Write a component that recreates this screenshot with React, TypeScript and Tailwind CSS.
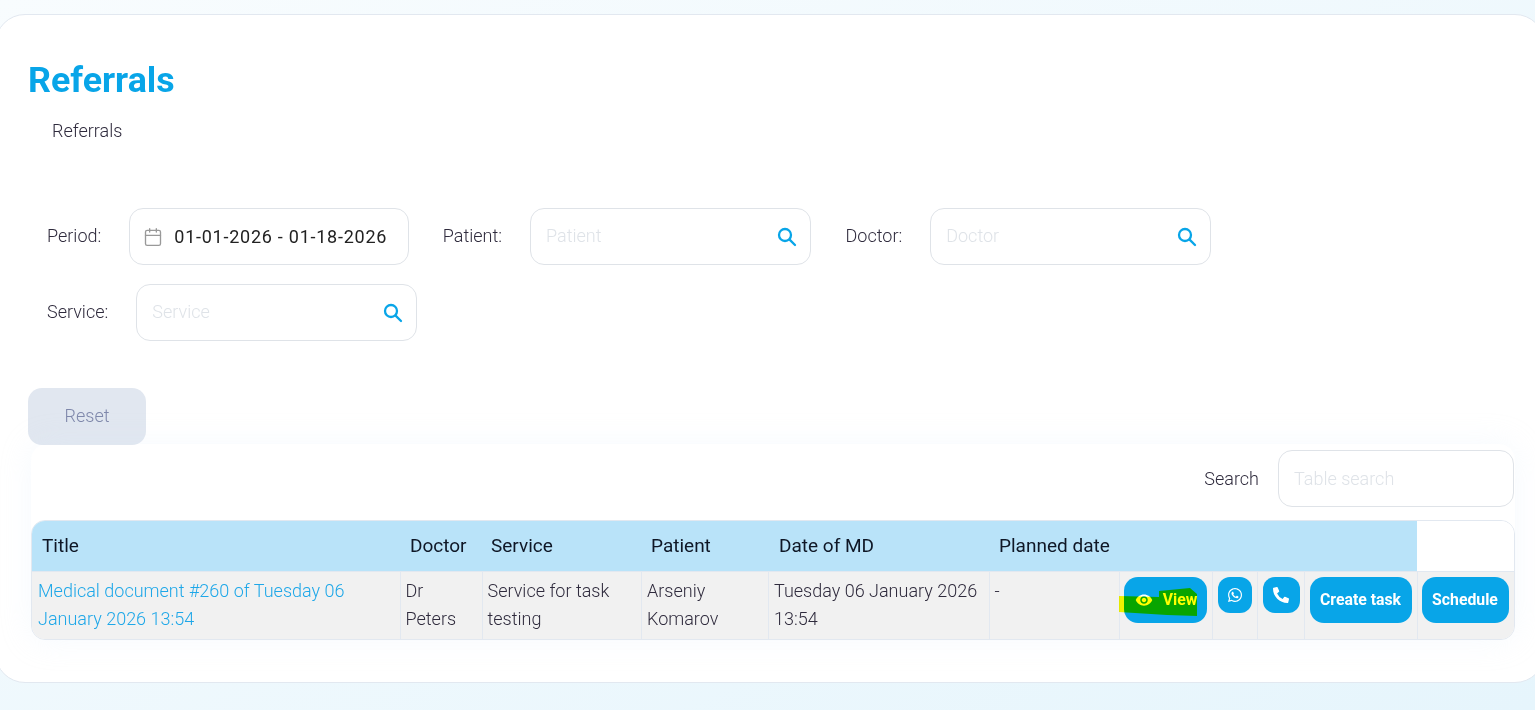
import { Calendar } from "lucide-react";
import { FaWhatsapp, FaPhoneAlt } from "react-icons/fa";
import { MdRemoveRedEye } from "react-icons/md";

const inputBox = "flex h-[57px] items-center rounded-[14px] border border-[#dfe3e8] bg-white";

function SearchIcon() {
  return (
    <svg width="20" height="20" viewBox="0 0 20 20" fill="none" stroke="#08a5e8" strokeWidth="2.3" strokeLinecap="round">
      <circle cx="8" cy="8" r="6" />
      <line x1="12.6" y1="12.6" x2="18" y2="18" />
    </svg>
  );
}

function SearchField({ placeholder, width }: { placeholder: string; width: string }) {
  return (
    <div className={`${inputBox} ${width} pl-[15px] pr-[13px]`}>
      <span className="flex-1 pb-[2px] text-[18px] font-light text-[#dfe3e8]">{placeholder}</span>
      <SearchIcon />
    </div>
  );
}

function Label({ children }: { children: string }) {
  return <span className="mr-[28px] pb-[2px] text-[18px] font-light text-[#2f2b3d]">{children}</span>;
}

const cell = "border-l border-[#e2e8f0] align-top";
const head = "bg-[#b9e3f9] text-[19px] font-normal";
const btn = "flex h-[46px] items-center justify-center rounded-[14px] bg-[#08a5e8] text-[15.8px] font-bold text-white";

export default function App() {
  return (
    <div
      className="h-[710px] overflow-hidden bg-gradient-to-br from-[#f8fcfe] to-[#e6f5fc] pt-[14px] text-[#2f2b3d]"
      style={{ fontFamily: "Roboto, sans-serif" }}
    >
      <div className="-ml-[5px] h-[669px] w-[1550px] rounded-[30px] border border-[#e2e8f0] bg-white pl-[32px] pt-[40px]">
        <h1 className="text-[35.8px] font-bold leading-[50px] text-[#08a5e8]">Referrals</h1>
        <p className="ml-[24px] mt-[12px] text-[18px] font-light leading-[28px]">Referrals</p>

        <div className="ml-[19px] mt-[63px] flex flex-col gap-[19px]">
          <div className="flex items-center">
            <Label>Period:</Label>
            <div className={`${inputBox} w-[280px] pl-[13px]`}>
              <Calendar size={20} strokeWidth={1.6} className="text-[#999]" />
              <span className="ml-[11px] text-[18px] tracking-[0.75px] text-[#222]">01-01-2026 - 01-18-2026</span>
            </div>
            <span className="ml-[33.5px] flex"><Label>Patient:</Label></span>
            <SearchField placeholder="Patient" width="w-[281px]" />
            <span className="ml-[34.5px] flex"><Label>Doctor:</Label></span>
            <SearchField placeholder="Doctor" width="w-[281px]" />
          </div>
          <div className="flex items-center">
            <Label>Service:</Label>
            <SearchField placeholder="Service" width="w-[281px]" />
          </div>
        </div>

        <button className="mt-[47px] block h-[57px] w-[118px] rounded-[14px] bg-[#e1e7f0] pb-[2px] text-[18px] font-light text-[#7f88ab]">
          Reset
        </button>

        <div className="ml-[3px] w-[1484px] rounded-[16px] shadow-[0_0_30px_rgba(220,235,250,0.25)]">
          <div className="-mt-px flex items-center justify-end pt-[6px]">
            <span className="mr-[19px] text-[18px] font-light">Search</span>
            <div className={`${inputBox} mr-[1px] w-[236px] pl-[15px] text-[18px] font-light text-[#dfe3e8]`}>Table search</div>
          </div>
          <div className="mt-[13px] overflow-hidden rounded-[14px] border border-[#e2e8f0]">
            <table className="w-full table-fixed border-collapse text-[18px] font-light">
              <colgroup>
                <col className="w-[368px]" />
                <col className="w-[82px]" />
                <col className="w-[159px]" />
                <col className="w-[127px]" />
                <col className="w-[221px]" />
                <col className="w-[130px]" />
                <col className="w-[93px]" />
                <col className="w-[45px]" />
                <col className="w-[47px]" />
                <col className="w-[113px]" />
                <col />
              </colgroup>
              <thead>
                <tr className="h-[50px] text-left text-[#0f1726]">
                  <th className={`${head} pl-[10px]`}>Title</th>
                  <th className={`${head} pl-[10px]`}>Doctor</th>
                  <th className={`${head} pl-[9px]`}>Service</th>
                  <th className={`${head} pl-[10px]`}>Patient</th>
                  <th className={`${head} pl-[11px]`}>Date of MD</th>
                  <th colSpan={5} className={`${head} pl-[10px]`}>Planned date</th>
                  <th className="bg-white" />
                </tr>
              </thead>
              <tbody>
                <tr className="h-[68px] border-t border-[#e2e8f0] bg-[#f1f1f1] leading-[28px]">
                  <td className="px-[6px] pt-[5px] align-top text-[#1ea7e8]">Medical document #260 of Tuesday 06 January 2026 13:54</td>
                  <td className={`${cell} px-[5px] pt-[5px]`}>Dr Peters</td>
                  <td className={`${cell} px-[5px] pt-[5px]`}>Service for task testing</td>
                  <td className={`${cell} px-[5.5px] pt-[5px]`}>Arseniy Komarov</td>
                  <td className={`${cell} px-[5.5px] pt-[5px]`}>Tuesday 06 January 2026 13:54</td>
                  <td className={`${cell} px-[5px] pt-[5px]`}>-</td>
                  <td className={`${cell} pl-[4px] pt-[5px]`}>
                    <div className="relative w-[83px]">
                      <div className={`${btn} gap-[10px] pl-[2px]`}>
                        <MdRemoveRedEye size={18} />
                        <span>View</span>
                      </div>
                      <svg
                        className="pointer-events-none absolute left-[-5px] top-[10px] mix-blend-multiply"
                        width="80"
                        height="30"
                        viewBox="0 0 80 30"
                      >
                        <polygon points="0,9 40,10 40,4 71,1 78,7 78,29 48,28 0,25" fill="#ffff00" />
                      </svg>
                    </div>
                  </td>
                  <td className={`${cell} pl-[5px] pt-[5px]`}>
                    <div className="flex h-[36px] w-[34px] items-center justify-center rounded-[12px] bg-[#08a5e8] text-white">
                      <FaWhatsapp size={16} />
                    </div>
                  </td>
                  <td className={`${cell} pl-[5px] pt-[5px]`}>
                    <div className="flex h-[36px] w-[37px] items-center justify-center rounded-[12px] bg-[#08a5e8] text-white">
                      <FaPhoneAlt size={16} />
                    </div>
                  </td>
                  <td className={`${cell} pl-[5px] pt-[5px]`}>
                    <div className={`${btn} w-[102px]`}>Create task</div>
                  </td>
                  <td className={`${cell} pl-[4px] pt-[5px]`}>
                    <div className={`${btn} w-[87px]`}>Schedule</div>
                  </td>
                </tr>
              </tbody>
            </table>
          </div>
        </div>
      </div>
    </div>
  );
}
